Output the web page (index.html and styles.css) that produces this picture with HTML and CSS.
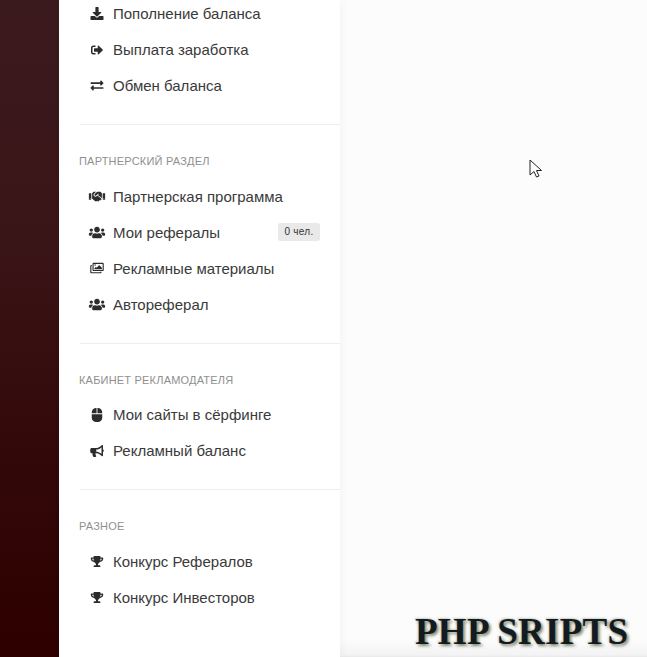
FILE: index.html
```html
<!DOCTYPE html>
<html lang="ru">
<head>
<meta charset="utf-8">
<title>Кабинет</title>
<link rel="stylesheet" href="styles.css">
</head>
<body>
<svg class="defs" width="0" height="0" aria-hidden="true">
  <symbol id="i-download" viewBox="0 0 512 512"><path d="M216 0h80c13.3 0 24 10.7 24 24v168h87.7c17.8 0 26.7 21.5 14.1 34.1L269.7 378.3c-7.5 7.5-19.8 7.5-27.3 0L90.1 226.1c-12.6-12.6-3.7-34.1 14.1-34.1H192V24c0-13.3 10.7-24 24-24zm296 376v112c0 13.3-10.7 24-24 24H24c-13.3 0-24-10.7-24-24V376c0-13.3 10.7-24 24-24h146.7l49 49c20.1 20.1 52.5 20.1 72.6 0l49-49H488c13.3 0 24 10.7 24 24z"/></symbol>
  <symbol id="i-signout" viewBox="0 0 512 512"><path d="M497 273L329 441c-15 15-41 4.5-41-17v-96H152c-13.3 0-24-10.7-24-24v-96c0-13.3 10.7-24 24-24h136V88c0-21.4 25.9-32 41-17l168 168c9.3 9.4 9.3 24.6 0 34zM192 436v-40c0-6.6-5.4-12-12-12H96c-17.7 0-32-14.3-32-32V160c0-17.7 14.3-32 32-32h84c6.6 0 12-5.4 12-12V76c0-6.6-5.4-12-12-12H96c-53 0-96 43-96 96v192c0 53 43 96 96 96h84c6.6 0 12-5.4 12-12z"/></symbol>
  <symbol id="i-exchange" viewBox="0 0 512 512"><path d="M0 168v-16c0-13.255 10.745-24 24-24h360V80c0-21.367 25.899-32.042 40.971-16.971l80 80c9.372 9.373 9.372 24.569 0 33.941l-80 80C409.956 271.982 384 261.456 384 240v-48H24c-13.255 0-24-10.745-24-24zm488 152H128v-48c0-21.314-25.862-32.08-40.971-16.971l-80 80c-9.372 9.373-9.372 24.569 0 33.941l80 80C102.057 463.997 128 453.437 128 432v-48h360c13.255 0 24-10.745 24-24v-16c0-13.255-10.745-24-24-24z"/></symbol>
  <symbol id="i-handshake" viewBox="0 0 640 512"><path d="M434.7 64h-85.9c-8 0-15.7 3-21.6 8.4l-98.3 90c-.1.1-.2.3-.3.4-16.6 15.6-16.3 40.5-2.1 56 12.7 13.9 39.4 17.6 56.1 2.7.1-.1.3-.1.4-.2l79.9-73.2c6.5-5.9 16.7-5.5 22.6 1 6 6.5 5.5 16.6-1 22.6l-26.1 23.9L504 313.8c2.9 2.4 5.5 5 7.9 7.7V128l-54.6-54.6c-5.9-6-14.1-9.4-22.6-9.4zM544 128.2v223.9c0 17.7 14.3 32 32 32h64V128.2h-96zm48 223.9c-8.8 0-16-7.2-16-16s7.2-16 16-16 16 7.2 16 16-7.2 16-16 16zM0 384h64c17.7 0 32-14.3 32-32V128.2H0V384zm48-63.9c8.8 0 16 7.2 16 16s-7.2 16-16 16-16-7.2-16-16c0-8.9 7.2-16 16-16zm435.9 18.6L334.6 217.5l-30 27.5c-29.7 27.1-75.2 24.5-101.7-4.4-26.9-29.4-24.8-74.9 4.4-101.7L289.1 64h-83.8c-8.5 0-16.6 3.4-22.6 9.4L128 128v223.9h18.3l90.5 81.9c27.4 22.3 67.7 18.1 90-9.3l.2-.2 17.9 15.5c15.9 13 39.4 10.5 52.3-5.4l31.4-38.6 5.4 4.4c13.7 11.1 33.9 9.1 45-4.7l9.5-11.7c11.2-13.8 9.1-33.9-4.6-45.1z"/></symbol>
  <symbol id="i-users" viewBox="0 0 640 512"><path d="M96 224c35.3 0 64-28.7 64-64s-28.7-64-64-64-64 28.7-64 64 28.7 64 64 64zm448 0c35.3 0 64-28.7 64-64s-28.7-64-64-64-64 28.7-64 64 28.7 64 64 64zm32 32h-64c-17.6 0-33.5 7.1-45.1 18.6 40.3 22.1 68.9 62 75.1 109.4h66c17.7 0 32-14.3 32-32v-32c0-35.3-28.7-64-64-64zm-256 0c61.9 0 112-50.1 112-112S381.9 32 320 32 208 82.1 208 144s50.1 112 112 112zm76.8 32h-8.3c-20.8 10-43.9 16-68.5 16s-47.6-6-68.5-16h-8.3C179.6 288 128 339.6 128 403.2V432c0 26.5 21.5 48 48 48h288c26.5 0 48-21.5 48-48v-28.8c0-63.6-51.6-115.2-115.2-115.2zm-223.7-13.4C161.5 263.1 145.6 256 128 256H64c-35.3 0-64 28.7-64 64v32c0 17.7 14.3 32 32 32h65.9c6.3-47.4 34.9-87.3 75.2-109.4z"/></symbol>
  <symbol id="i-images" viewBox="0 0 576 512"><path d="M480 416v16c0 26.51-21.49 48-48 48H48c-26.51 0-48-21.49-48-48V176c0-26.51 21.49-48 48-48h16v48H54c-3.3 0-6 2.7-6 6v244c0 3.3 2.7 6 6 6h372c3.3 0 6-2.7 6-6v-10h48z"/><path fill-rule="evenodd" d="M528 32H144c-26.51 0-48 21.49-48 48v256c0 26.51 21.49 48 48 48h384c26.51 0 48-21.49 48-48V80c0-26.51-21.49-48-48-48zM150 80h372c3.3 0 6 2.7 6 6v244c0 3.300-2.700 6-6 6H150c-3.300 0-6-2.700-6-6V86c0-3.300 2.700-6 6-6z"/><path d="M176 304v-32l55-55c4.700-4.700 12.300-4.700 17 0l24 24 103-103c4.700-4.700 12.300-4.700 17 0l104 104v62zM240 128a32 32 0 1 1-64 0 32 32 0 1 1 64 0z"/></symbol>
  <symbol id="i-mouse" viewBox="0 0 384 512"><path d="M0 352a160 160 0 0 0 160 160h64a160 160 0 0 0 160-160V224H0zM176 0h-16A160 160 0 0 0 0 160v32h176zm48 0h-16v192h176v-32A160 160 0 0 0 224 0z"/></symbol>
  <symbol id="i-bullhorn" viewBox="0 0 576 512"><path d="M576 240c0-23.63-12.95-44.04-32-55.12V32.01C544 23.26 537.02 0 512 0c-7.12 0-14.19 2.38-19.98 7.02l-85.03 68.03C364.28 109.19 310.66 128 256 128H64c-35.35 0-64 28.65-64 64v96c0 35.35 28.65 64 64 64h33.7c-1.39 10.48-2.18 21.14-2.18 32 0 39.77 9.26 77.35 25.56 110.94 5.19 10.69 16.52 17.06 28.4 17.06h74.28c26.05 0 41.69-29.84 25.9-50.56-16.4-21.52-26.15-48.36-26.15-77.44 0-11.11 1.62-21.79 4.41-32H256c54.66 0 108.28 18.81 150.98 52.95l85.03 68.03a32.023 32.023 0 0 0 19.98 7.02c24.92 0 32-22.78 32-32V295.13C563.05 284.04 576 263.63 576 240zm-96 141.42l-33.05-26.44C392.95 311.78 325.12 288 256 288v-96c69.12 0 136.95-23.78 190.95-66.98L480 98.58v282.84z"/></symbol>
  <symbol id="i-trophy" viewBox="0 0 576 512"><path d="M552 64H448V24c0-13.3-10.7-24-24-24H152c-13.3 0-24 10.7-24 24v40H24C10.7 64 0 74.7 0 88v56c0 35.7 22.5 72.4 61.9 100.7 31.5 22.7 69.8 37.1 110 41.7C203.3 338.5 240 360 240 360v72h-48c-35.3 0-64 20.7-64 56v12c0 6.6 5.4 12 12 12h296c6.6 0 12-5.4 12-12v-12c0-35.3-28.7-56-64-56h-48v-72s36.7-21.5 68.1-73.6c40.3-4.6 78.6-19 110-41.7 39.3-28.3 61.9-65 61.900-100.700V88c0-13.300-10.700-24-24-24zM99.300 192.800C74.900 175.200 64 155.600 64 144v-16h64.200c1 32.600 5.800 61.200 12.800 86.200-15.100-5.200-29.200-12.400-41.700-21.400zM512 144c0 16.100-17.700 36.100-35.300 48.800-12.500 9-26.700 16.200-41.800 21.400 7-25 11.800-53.600 12.800-86.200H512v16z"/></symbol>
</svg>

<div class="layout">
  <div class="rail"></div>
  <aside class="sidebar">
    <ul class="menu menu-first">
      <li class="item"><svg class="icon"><use href="#i-download"/></svg><span class="name">Пополнение баланса</span></li>
      <li class="item"><svg class="icon icon-sm"><use href="#i-signout"/></svg><span class="name">Выплата заработка</span></li>
      <li class="item"><svg class="icon"><use href="#i-exchange"/></svg><span class="name">Обмен баланса</span></li>
    </ul>
    <section class="group">
      <h3 class="label">Партнерский раздел</h3>
      <ul class="menu">
        <li class="item"><svg class="icon"><use href="#i-handshake"/></svg><span class="name">Партнерская программа</span></li>
        <li class="item"><svg class="icon"><use href="#i-users"/></svg><span class="name">Мои рефералы</span><span class="badge">0 чел.</span></li>
        <li class="item"><svg class="icon icon-sm"><use href="#i-images"/></svg><span class="name">Рекламные материалы</span></li>
        <li class="item"><svg class="icon"><use href="#i-users"/></svg><span class="name">Автореферал</span></li>
      </ul>
    </section>
    <section class="group">
      <h3 class="label">Кабинет рекламодателя</h3>
      <ul class="menu">
        <li class="item"><svg class="icon icon-lg"><use href="#i-mouse"/></svg><span class="name">Мои сайты в сёрфинге</span></li>
        <li class="item"><svg class="icon icon-sm"><use href="#i-bullhorn"/></svg><span class="name">Рекламный баланс</span></li>
      </ul>
    </section>
    <section class="group">
      <h3 class="label">Разное</h3>
      <ul class="menu">
        <li class="item"><svg class="icon icon-xs"><use href="#i-trophy"/></svg><span class="name">Конкурс Рефералов</span></li>
        <li class="item"><svg class="icon icon-xs"><use href="#i-trophy"/></svg><span class="name">Конкурс Инвесторов</span></li>
      </ul>
    </section>
  </aside>
  <main class="content"></main>
</div>

<svg class="pointer" viewBox="0 0 14 20" width="14" height="20" aria-hidden="true"><path d="M1 1v15l4-3.500 2.500 5.500 2.500-1-2.500-5.500h5z" fill="#fff" stroke="#222" stroke-width="1"/></svg>
<div class="watermark">PHP SRIPTS</div>
</body>
</html>
```

FILE: styles.css
```css
* { box-sizing: border-box; }
html, body { margin: 0; height: 100%; overflow: hidden; }
body { font-family: "Liberation Sans", Arial, sans-serif; color: #333; background: #fcfcfc; position: relative; }
.defs { position: absolute; }
.layout { display: flex; height: 657px; overflow: hidden; }
.rail { width: 59px; flex: none; background: linear-gradient(180deg, #3b1a1d 0%, #3a1518 35%, #330808 70%, #2e0000 100%); }
.sidebar { width: 281px; flex: none; background: #fff; box-shadow: 2px 0 8px rgba(0,0,0,.035); position: relative; }
.content { flex: 1; background: linear-gradient(180deg, #fcfcfc 0, #fcfcfc 640px, #f3f3f3 655px, #e8e8e8 657px); }
.menu { list-style: none; margin: 0; padding: 0; }
.menu-first { margin-top: -4px; }
.item { height: 36px; display: flex; align-items: center; padding: 0 20px 1px 29px; font-size: 15px; color: #3a3a3a; }
.icon { width: 18px; height: 13px; flex: none; fill: #2c2c2c; margin-right: 7px; }
.icon-lg { height: 14px; }
.icon-sm { height: 12px; }
.icon-xs { height: 11px; }
.name { flex: 1; }
.badge { font-size: 10px; background: #e9e9e9; color: #333; width: 42px; height: 18px; line-height: 18px; text-align: center; border-radius: 2px; letter-spacing: .3px; }
.group { margin-top: 20px; margin-left: 21px; border-top: 1px solid #eee; }
.group .menu { margin-left: -21px; }
.label { margin: 0 0 0 -1px; height: 53.500px; padding-top: 29px; font-size: 11px; line-height: 14px; font-weight: 400; letter-spacing: .2px; text-transform: uppercase; color: #8f8f8f; }
.pointer { position: absolute; left: 529px; top: 159px; }
.watermark { position: absolute; left: 415px; top: 610px; font-family: "Liberation Serif", serif; font-weight: 700; font-size: 37px; letter-spacing: .25px; line-height: 44px; white-space: nowrap; color: #121a22; text-shadow: 2px 2px 3px rgba(90,95,60,.75), -1px -1px 2px rgba(120,130,100,.35); }
```
